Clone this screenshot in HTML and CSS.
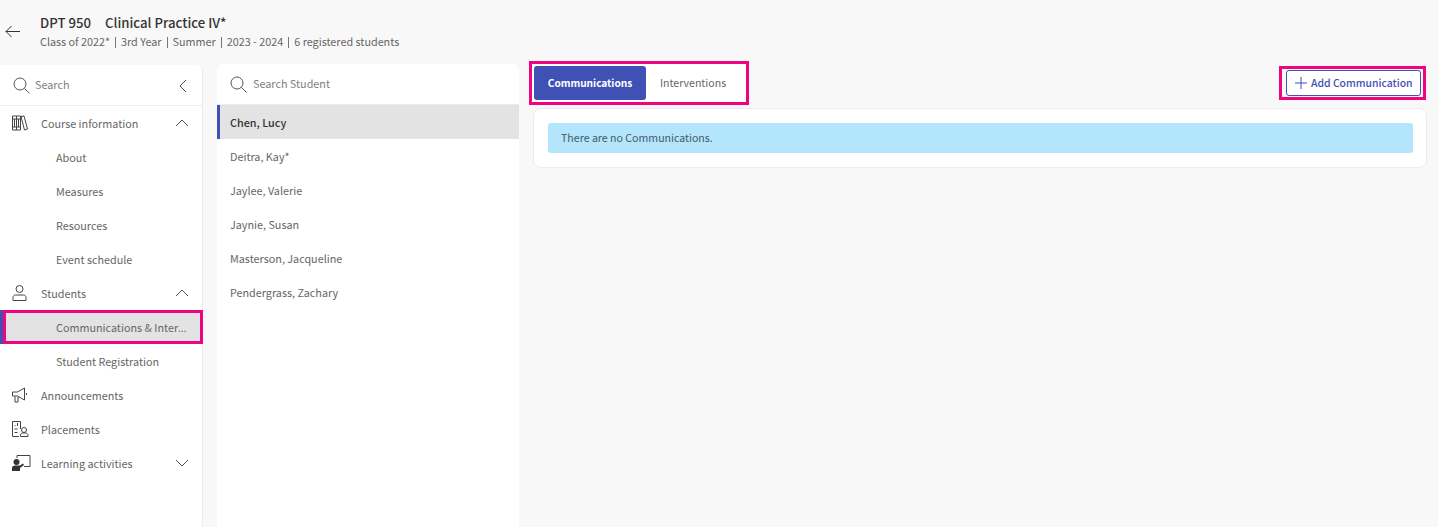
FILE: index.html
```html
<!DOCTYPE html>
<html>
<head>
  <link rel="stylesheet" href="styles.css">
</head>
<body>
  <header class="page-head">
    <svg class="back-icon" width="15" height="13" viewBox="0 0 15 13"><path d="M15 6.500H1M6.500 1L1 6.500 6.500 12"/></svg>
    <div>
      <h1 class="course-title"><span class="course-code">DPT 950</span>Clinical Practice IV*</h1>
      <p class="course-meta">Class of 2022*<i></i>3rd Year<i></i>Summer<i></i>2023 - 2024<i></i>6 registered students</p>
    </div>
  </header>

  <div class="layout">
    <nav class="sidebar">
      <div class="side-search">
        <svg class="search-icon" width="17" height="17" viewBox="0 0 17 17"><circle cx="7" cy="7" r="6"/><path d="M11.500 11.500l5 5"/></svg>
        <span class="placeholder">Search</span>
        <svg class="collapse-icon" width="8" height="14" viewBox="0 0 8 14"><path d="M7 1L1 7l6 6"/></svg>
      </div>
      <ul class="nav-list">
        <li class="nav-item">
          <svg class="nav-icon" width="17" height="16" viewBox="0 0 17 16"><path d="M.5 1h4v14h-4zM4.500 1h4v14h-4zM.5 4h8M.5 12h8M2.500 4v8M6.500 4v8M9 1.500l3-.5 3.500 13-3 1z"/></svg>
          <span class="nav-label">Course information</span>
          <svg class="chevron" width="14" height="8" viewBox="0 0 14 8"><path d="M1 7l6-6 6 6"/></svg>
        </li>
        <li class="nav-sub">About</li>
        <li class="nav-sub">Measures</li>
        <li class="nav-sub">Resources</li>
        <li class="nav-sub">Event schedule</li>
        <li class="nav-item">
          <svg class="nav-icon" width="17" height="16" viewBox="0 0 17 16"><circle cx="7.500" cy="4" r="3.500"/><path d="M1 15.500v-3C1 11 2 10 3.500 10h8c1.500 0 2.500 1 2.500 2.500v3z"/></svg>
          <span class="nav-label">Students</span>
          <svg class="chevron" width="14" height="8" viewBox="0 0 14 8"><path d="M1 7l6-6 6 6"/></svg>
        </li>
        <li class="nav-sub nav-sub-active">Communications &amp; Inter<span class="dots">…</span></li>
        <li class="nav-sub">Student Registration</li>
        <li class="nav-item">
          <svg class="nav-icon" width="17" height="16" viewBox="0 0 17 16"><path d="M.5 5h5l7-4v12l-7-4h-5zM3 9.500V15h3V9.800M14.500 6v2"/></svg>
          <span class="nav-label">Announcements</span>
        </li>
        <li class="nav-item">
          <svg class="nav-icon" width="17" height="16" viewBox="0 0 17 16"><path d="M8.500 8V.5h-8v15h6.500M2.500 4.500h1M2.500 8h3M2.500 11.500h3M5.500 2v3"/><circle cx="12" cy="9" r="2.500"/><path d="M8.500 15.500V14c0-1 1-2 2-2h3c1 0 2.500 1 2.500 2v1.500z"/></svg>
          <span class="nav-label">Placements</span>
        </li>
        <li class="nav-item">
          <svg class="nav-icon" width="19" height="16" viewBox="0 0 19 16"><path d="M5 3V.5h13v11h-6"/><circle class="solid" cx="4.500" cy="7" r="3"/><path class="solid" d="M0 16v-3c0-1.500 1.500-2.500 3-2.500h5l3-2 1 1.500-4 3v3z"/></svg>
          <span class="nav-label nav-label-tight">Learning activities</span>
          <svg class="chevron" width="14" height="8" viewBox="0 0 14 8"><path d="M1 1l6 6 6-6"/></svg>
        </li>
      </ul>
    </nav>

    <section class="students">
      <div class="student-search">
        <svg class="search-icon" width="17" height="17" viewBox="0 0 17 17"><circle cx="7" cy="7" r="6"/><path d="M11.500 11.500l5 5"/></svg>
        <span class="placeholder placeholder-wide">Search Student</span>
      </div>
      <ul class="student-list">
        <li class="student student-active">Chen, Lucy</li>
        <li class="student">Deitra, Kay*</li>
        <li class="student">Jaylee, Valerie</li>
        <li class="student">Jaynie, Susan</li>
        <li class="student">Masterson, Jacqueline</li>
        <li class="student">Pendergrass, Zachary</li>
      </ul>
    </section>

    <main class="content">
      <div class="toolbar">
        <div class="tabs">
          <div class="tab tab-active">Communications</div>
          <div class="tab">Interventions</div>
        </div>
        <div class="add-wrap">
          <button class="add-btn">
            <svg width="12" height="12" viewBox="0 0 12 12"><path d="M6 0v12M0 6h12"/></svg>
            Add Communication
          </button>
        </div>
      </div>
      <div class="card">
        <div class="alert">There are no Communications.</div>
      </div>
    </main>
  </div>
</body>
</html>
```

FILE: styles.css
```css
* {
  box-sizing: border-box;
}

html, body {
  height: 100%;
}

body {
  margin: 0;
  background-color: #f8f8f8;
  color: #666;
  font-family: "Noto Sans CJK JP", "Noto Sans", sans-serif;
  font-size: 10.8px;
  overflow: hidden;
}

svg {
  fill: none;
  stroke: currentColor;
  stroke-width: 1;
  flex-shrink: 0;
}

ul {
  list-style: none;
  margin: 0;
  padding: 0;
}

.page-head {
  display: flex;
  align-items: center;
  height: 64px;
  padding: 0 0 2px 5px;
}

.back-icon {
  color: #333;
  margin-right: 20px;
  margin-top: 1px;
}

.course-title {
  margin: 0;
  font-size: 13.2px;
  font-weight: 500;
  line-height: 19px;
  color: #333;
}

.course-code {
  margin-right: 14px;
}

.course-meta {
  margin: 0;
  font-size: 10.8px;
  line-height: 18px;
  color: #666;
}

.course-meta i {
  display: inline-block;
  width: 1px;
  height: 11px;
  margin: 0 5px;
  background-color: #777;
  vertical-align: -2px;
}

.layout {
  display: flex;
  height: 463px;
}

.sidebar {
  width: 203px;
  margin-top: 1px;
  background-color: #fff;
  border-right: 1px solid #ececec;
  border-radius: 0 6px 0 0;
}

.side-search {
  display: flex;
  align-items: center;
  height: 41px;
  padding: 0 15px 0 13px;
  border-bottom: 1px solid #ececec;
}

.placeholder {
  color: #808080;
  margin: 0 0 2px 5px;
}

.placeholder-wide {
  margin-left: 6px;
}

.search-icon {
  color: #555;
}

.collapse-icon {
  color: #555;
  margin-left: auto;
  margin-top: 1px;
}

.nav-item {
  display: flex;
  align-items: center;
  height: 34px;
  padding: 0 13px 0 12px;
}

.nav-icon {
  color: #444;
}

.nav-icon .solid {
  fill: #333;
  stroke: none;
}

.nav-label {
  margin-left: 12px;
}

.nav-label-tight {
  margin-left: 10px;
}

.chevron {
  margin-left: auto;
  color: #555;
}

.nav-sub {
  display: flex;
  align-items: center;
  height: 34px;
  padding-left: 56px;
  white-space: nowrap;
}

.nav-sub-active {
  margin: 0 -1px 0 3px;
  padding: 0 0 0 50px;
  background-color: #e3e3e3;
  border: 3px solid #f0047f;
  box-shadow: -3px 0 0 #3f51b5;
}

/* the CJK face centres its ellipsis, this one sits on the baseline */
.dots {
  font-family: "Noto Sans", sans-serif;
  letter-spacing: 1px;
}

.students {
  width: 302px;
  margin-left: 14px;
  background-color: #fff;
  border-radius: 6px 6px 0 0;
}

.student-search {
  display: flex;
  align-items: center;
  height: 41px;
  padding-left: 13px;
  border-bottom: 1px solid #ececec;
}

.student {
  display: flex;
  align-items: center;
  height: 34px;
  padding-left: 13px;
}

.student-active {
  padding-left: 10px;
  background-color: #e3e3e3;
  border-left: 3px solid #3f51b5;
  color: #333;
  font-weight: 500;
}

.content {
  flex: 1;
  margin: 0 11px 0 14px;
}

.toolbar {
  display: flex;
  justify-content: space-between;
  align-items: center;
  height: 44px;
}

.tabs {
  display: flex;
  width: 220px;
  height: 44px;
  margin-left: -4px;
  margin-top: -6px;
  padding: 2px;
  background-color: #fff;
  border: 3px solid #f0047f;
}

.tab {
  display: flex;
  align-items: center;
  justify-content: center;
  width: 94px;
  padding-bottom: 1px;
  font-size: 10.6px;
}

.tab-active {
  width: 112px;
  background-color: #3f51b5;
  border-radius: 3px;
  color: #fff;
  font-size: 10.1px;
  font-weight: 700;
}

.add-wrap {
  display: flex;
  width: 147px;
  height: 34px;
  margin-right: 1px;
  margin-top: -7px;
  padding: 0 2px 0 4px;
  align-items: center;
  border: 3px solid #f0047f;
}

.add-btn {
  display: flex;
  align-items: center;
  gap: 4px;
  width: 100%;
  height: 26px;
  padding: 0 0 0 8px;
  background-color: #fff;
  border: 1px solid #3f51b5;
  border-radius: 3px;
  color: #3f51b5;
  font-family: inherit;
  font-size: 10.4px;
  font-weight: 500;
  white-space: nowrap;
}

.card {
  height: 60px;
  padding: 14px 13px 14px 14px;
  background-color: #fff;
  border: 1px solid #ececec;
  border-radius: 8px;
}

.alert {
  display: flex;
  align-items: center;
  height: 30px;
  padding: 0 0 1px 13px;
  background-color: #b3e5fc;
  border-radius: 3px;
  color: #455a64;
  font-size: 10.6px;
}
```
